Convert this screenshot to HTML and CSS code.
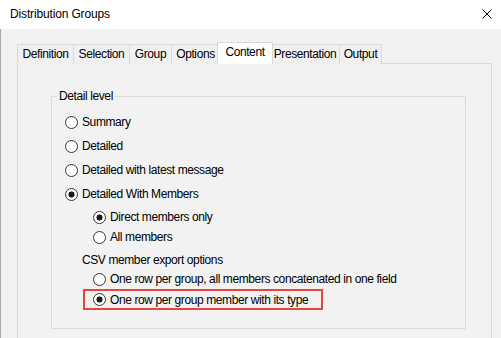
FILE: index.html
```html
<!DOCTYPE html>
<html>
<head>
<meta charset="utf-8">
<link rel="stylesheet" href="styles.css">
</head>
<body>
<div class="window">
  <div class="titlebar">
    <span class="title">Distribution Groups</span>
    <svg class="close" width="10" height="10" viewBox="0 0 10 10"><path d="M0.5 0.5 L9.5 9.5 M9.5 0.5 L0.5 9.5" stroke="#000" stroke-width="1" fill="none"/></svg>
  </div>
  <div class="client">
    <div class="tabs">
      <div class="tab tab-def">Definition</div>
      <div class="tab tab-sel">Selection</div>
      <div class="tab tab-grp">Group</div>
      <div class="tab tab-opt">Options</div>
      <div class="tab tab-con active">Content</div>
      <div class="tab tab-pre">Presentation</div>
      <div class="tab tab-out">Output</div>
    </div>
    <div class="panel">
      <fieldset class="group">
        <legend>Detail level</legend>
        <div class="options">
          <div class="row main"><span class="radio"></span>Summary</div>
          <div class="row main"><span class="radio"></span>Detailed</div>
          <div class="row main"><span class="radio"></span>Detailed with latest message</div>
          <div class="row main"><span class="radio checked"></span>Detailed With Members</div>
          <div class="row sub first"><span class="radio checked"></span>Direct members only</div>
          <div class="row sub"><span class="radio"></span>All members</div>
          <div class="label">CSV member export options</div>
          <div class="row sub"><span class="radio"></span>One row per group, all members concatenated in one field</div>
          <div class="row highlight"><span class="radio checked"></span>One row per group member with its type</div>
        </div>
      </fieldset>
    </div>
  </div>
</div>
</body>
</html>
```
FILE: styles.css
```css
html, body {
  margin: 0;
  padding: 0;
}
body {
  width: 501px;
  height: 338px;
  overflow: hidden;
  background: #f2f2f2;
  font-family: "Liberation Sans", Arial, sans-serif;
  font-size: 12px;
  letter-spacing: -0.4px;
  color: #000;
}
.window {
  display: flex;
  flex-direction: column;
  height: 338px;
}
.titlebar {
  height: 29px;
  flex: none;
  box-sizing: border-box;
  background: #fff;
  display: flex;
  align-items: center;
  justify-content: space-between;
  padding: 0 9px 2px 10px;
}
.title {
  letter-spacing: -0.15px;
}
.close {
  display: block;
}
.client {
  flex: 1;
  border-left: 1px solid #a8a8a8;
  padding: 13px 0 0 16px;
  box-sizing: border-box;
  display: flex;
  flex-direction: column;
}
.tabs {
  display: flex;
  align-items: flex-end;
  height: 21px;
  position: relative;
  z-index: 1;
}
.tab {
  height: 20px;
  box-sizing: border-box;
  border: 1px solid #d9d9d9;
  border-bottom: 0;
  margin-right: -1px;
  margin-bottom: -1px;
  background: #f0f0f0;
  display: flex;
  align-items: center;
  justify-content: center;
  padding-bottom: 1px;
}
.tab-def { width: 57px; }
.tab-sel { width: 57px; }
.tab-grp { width: 43px; }
.tab-opt { width: 49px; }
.tab-con { width: 52px; }
.tab-pre { width: 70px; }
.tab-out { width: 43px; }
.tab.active {
  width: 56px;
  height: 22px;
  margin-left: -2px;
  margin-right: -3px;
  background: #fff;
  position: relative;
  z-index: 2;
  padding-bottom: 3px;
}
.panel {
  width: 475px;
  flex: 1;
  box-sizing: border-box;
  border: 1px solid #d9d9d9;
  border-bottom: 0;
  padding: 25px 0 0 33px;
}
.group {
  margin: 0;
  padding: 0;
  width: 415px;
  height: 240px;
  box-sizing: border-box;
  border: 1px solid #dcdcdc;
  min-width: 0;
}
.group legend {
  margin-left: 5px;
  padding: 0 2px;
  line-height: 14px;
}
.options {
  margin-top: 7px;
  display: flex;
  flex-direction: column;
  align-items: flex-start;
}
.row {
  display: flex;
  align-items: center;
  white-space: nowrap;
}
.row.main {
  height: 24px;
  padding-left: 13px;
}
.row.sub {
  height: 20px;
  padding-left: 41px;
}
.row.sub.first {
  margin-top: 1px;
}
.label {
  height: 18px;
  line-height: 18px;
  margin-top: 4px;
  padding-left: 30px;
}
.row.highlight {
  height: 21px;
  box-sizing: border-box;
  border: 2px solid #e8453f;
  margin-left: 31px;
  padding: 0 13px 0 8px;
}
.radio {
  width: 13px;
  height: 13px;
  box-sizing: border-box;
  border: 1px solid #333;
  border-radius: 50%;
  background: #fff;
  margin-right: 4px;
  flex: none;
}
.radio.checked {
  background: radial-gradient(circle, #1a1a1a 0 2.8px, #fff 3.3px);
}
```
